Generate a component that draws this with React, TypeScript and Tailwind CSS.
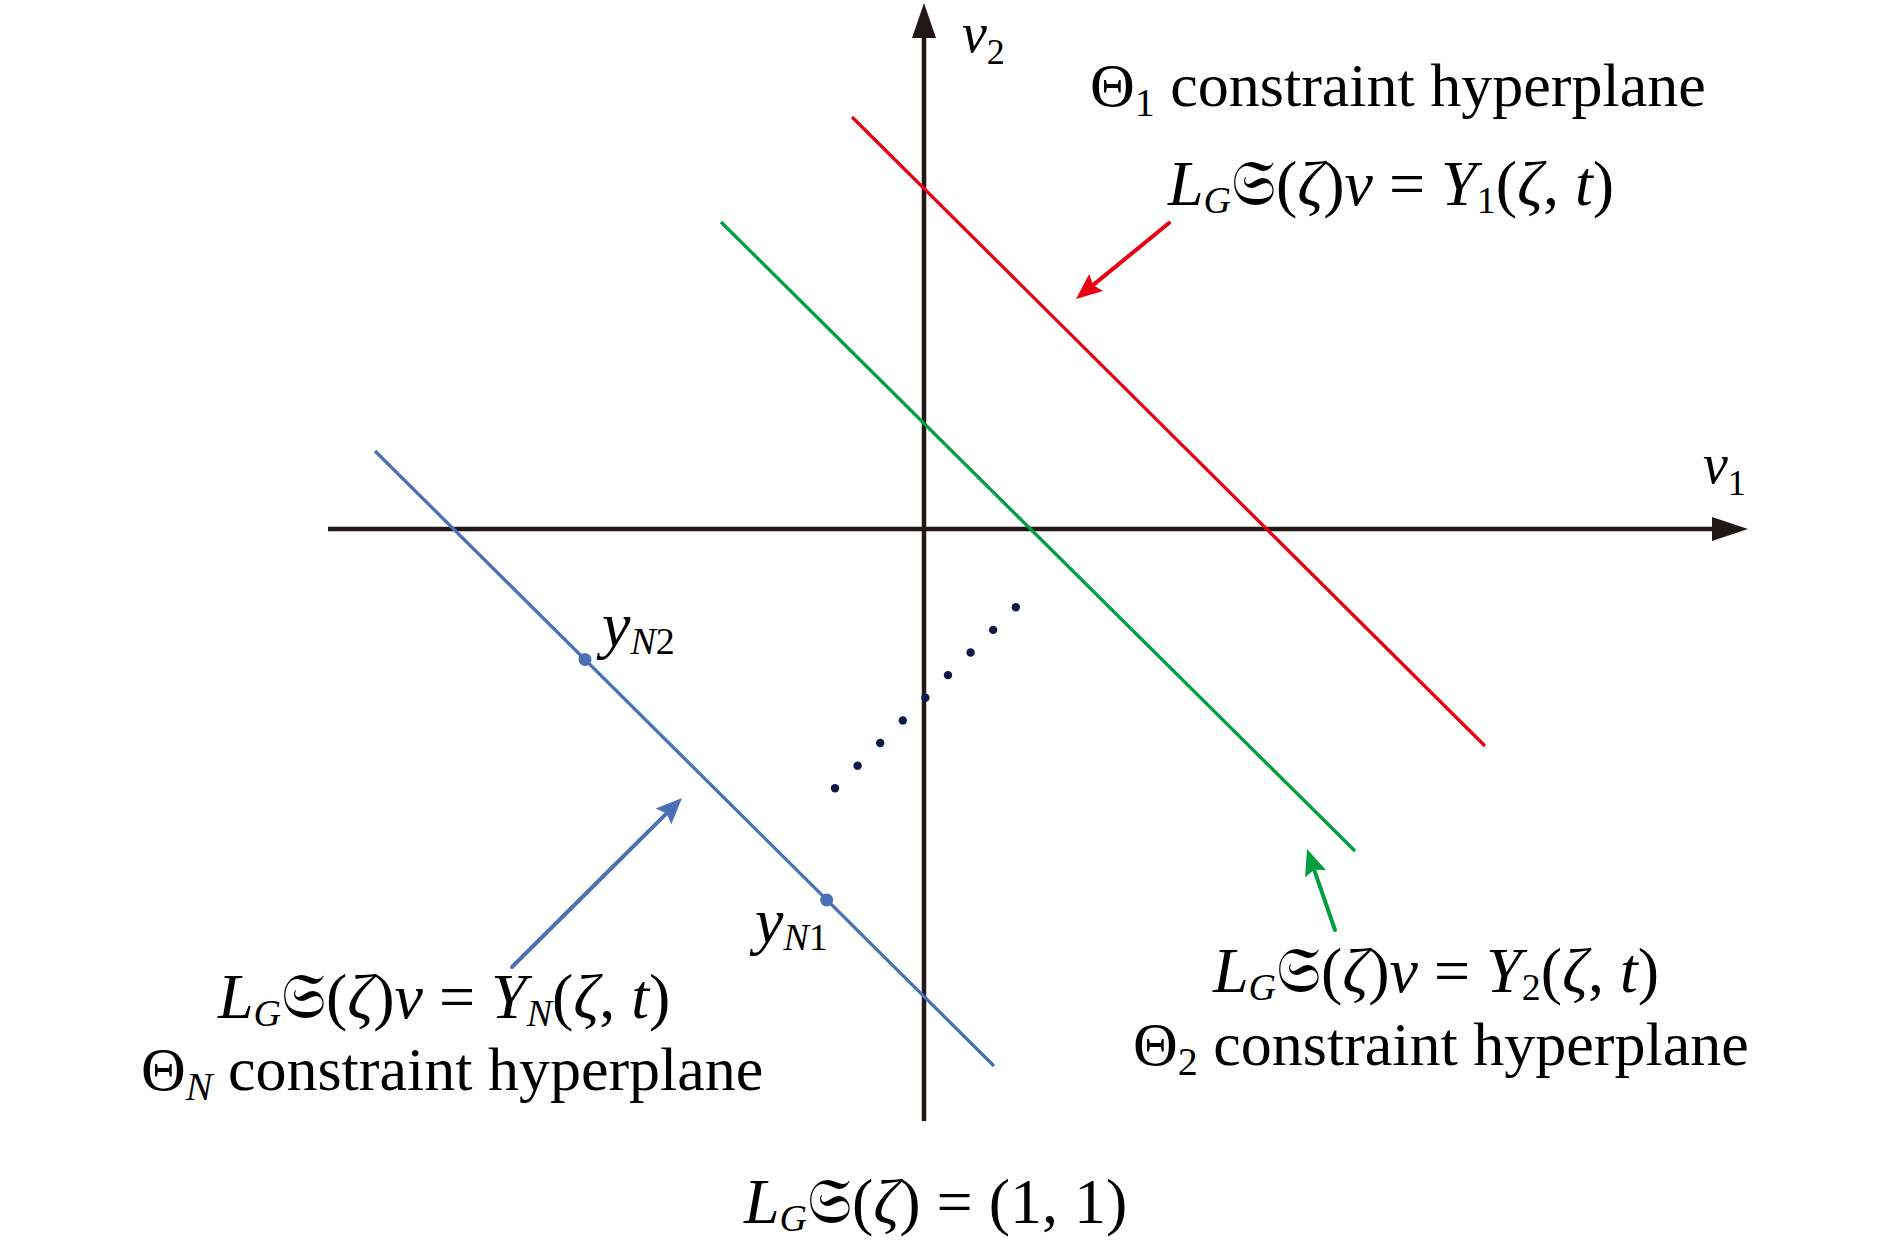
import React from "react";

const F = "'Liberation Serif', 'Times New Roman', 'DejaVu Serif', serif";
const AXIS = "#231815";
const RED = "#e60012";
const GREEN = "#00a040";
const BLUE = "#4a70b8";
const NAVY = "#0c1a4a";

function Arrow({ x1, y1, x2, y2, color, w = 4, len = 26, half = 11 }: { x1: number; y1: number; x2: number; y2: number; color: string; w?: number; len?: number; half?: number }) {
  const dx = x2 - x1;
  const dy = y2 - y1;
  const L = Math.hypot(dx, dy);
  const ux = dx / L;
  const uy = dy / L;
  const bx = x2 - ux * len;
  const by = y2 - uy * len;
  const px = -uy;
  const py = ux;
  const pts = `${x2},${y2} ${bx + px * half},${by + py * half} ${bx + ux * 4},${by + uy * 4} ${bx - px * half},${by - py * half}`;
  return (
    <g>
      <line x1={x1} y1={y1} x2={bx + ux * 6} y2={by + uy * 6} stroke={color} strokeWidth={w} strokeLinecap="round" />
      <polygon points={pts} fill={color} />
    </g>
  );
}

function Eq({ x, y, sub, size = 64, subSize = 38 }: { x: number; y: number; sub: string; size?: number; subSize?: number }) {
  return (
    <text x={x} y={y} fontFamily={F} fontSize={size} fill="#000">
      <tspan fontStyle="italic">L</tspan>
      <tspan fontStyle="italic" fontSize={subSize} dy={8}>G</tspan>
      <tspan dy={-8}>𝔖(</tspan>
      <tspan fontStyle="italic">ζ</tspan>
      <tspan>)</tspan>
      <tspan fontStyle="italic">v</tspan>
      <tspan> = </tspan>
      <tspan fontStyle="italic">Y</tspan>
      <tspan fontSize={subSize} dy={8} fontStyle={sub === "N" ? "italic" : "normal"}>{sub}</tspan>
      <tspan dy={-8}>(</tspan>
      <tspan fontStyle="italic">ζ</tspan>
      <tspan>, </tspan>
      <tspan fontStyle="italic">t</tspan>
      <tspan>)</tspan>
    </text>
  );
}

function Title({ x, y, sub, italic }: { x: number; y: number; sub: string; italic?: boolean }) {
  return (
    <text x={x} y={y} fontFamily={F} fontSize={62} fill="#000">
      <tspan>Θ</tspan>
      <tspan fontSize={40} dy={10} fontStyle={italic ? "italic" : "normal"}>{sub}</tspan>
      <tspan dy={-10}> constraint hyperplane</tspan>
    </text>
  );
}

export default function App() {
  const dots = Array.from({ length: 9 }, (_, i) => ({ x: 835 + i * 22.6, y: 788.3 - i * 22.63 }));
  return (
    <div className="w-[1890px] h-[1255px] bg-white overflow-hidden">
      <svg width={1890} height={1255} viewBox="0 0 1890 1255" className="block">
        {/* axes */}
        <line x1={328} y1={529} x2={1716} y2={529} stroke={AXIS} strokeWidth={4.5} />
        <polygon points="1748,529 1712,517 1712,541" fill={AXIS} />
        <line x1={924} y1={1121} x2={924} y2={34} stroke={AXIS} strokeWidth={4.5} />
        <polygon points="924,3 912,38 936,38" fill={AXIS} />

        {/* constraint lines */}
        <line x1={852} y1={117} x2={1485} y2={746} stroke={RED} strokeWidth={3.3} />
        <line x1={721} y1={222} x2={1355} y2={851} stroke={GREEN} strokeWidth={3.3} />
        <line x1={375} y1={451} x2={994} y2={1066} stroke={BLUE} strokeWidth={3.3} />

        {/* points on blue line */}
        <circle cx={585} cy={659.5} r={6.5} fill={BLUE} />
        <circle cx={826.7} cy={900} r={6.5} fill={BLUE} />

        {/* dotted line */}
        {dots.map((d, i) => (
          <circle key={i} cx={d.x} cy={d.y} r={4.2} fill={NAVY} />
        ))}

        {/* pointer arrows */}
        <Arrow x1={1169} y1={223} x2={1076} y2={299} color={RED} />
        <Arrow x1={1335} y1={930} x2={1307} y2={849} color={GREEN} />
        <Arrow x1={512} y1={967} x2={682} y2={798} color={BLUE} />

        {/* axis labels */}
        <text x={962} y={52} fontFamily={F} fontSize={56} fill="#000">
          <tspan fontStyle="italic">v</tspan>
          <tspan fontSize={36} dy={12}>2</tspan>
        </text>
        <text x={1703} y={483} fontFamily={F} fontSize={56} fill="#000">
          <tspan fontStyle="italic">v</tspan>
          <tspan fontSize={36} dy={12}>1</tspan>
        </text>

        {/* point labels */}
        <text x={602} y={646} fontFamily={F} fontSize={64} fill="#000">
          <tspan fontStyle="italic">y</tspan>
          <tspan fontSize={38} dy={8} fontStyle="italic">N</tspan>
          <tspan fontSize={38}>2</tspan>
        </text>
        <text x={755} y={942} fontFamily={F} fontSize={64} fill="#000">
          <tspan fontStyle="italic">y</tspan>
          <tspan fontSize={38} dy={8} fontStyle="italic">N</tspan>
          <tspan fontSize={38}>1</tspan>
        </text>

        {/* top right labels */}
        <Title x={1090} y={106} sub="1" />
        <Eq x={1168} y={205} sub="1" />

        {/* bottom right labels */}
        <Eq x={1213} y={992} sub="2" />
        <Title x={1133} y={1065} sub="2" />

        {/* bottom left labels */}
        <Eq x={218} y={1018} sub="N" />
        <Title x={141} y={1090} sub="N" italic />

        {/* bottom label */}
        <text x={744} y={1223} fontFamily={F} fontSize={64} fill="#000">
          <tspan fontStyle="italic">L</tspan>
          <tspan fontStyle="italic" fontSize={38} dy={8}>G</tspan>
          <tspan dy={-8}>𝔖(</tspan>
          <tspan fontStyle="italic">ζ</tspan>
          <tspan>) = (1, 1)</tspan>
        </text>
      </svg>
    </div>
  );
}
